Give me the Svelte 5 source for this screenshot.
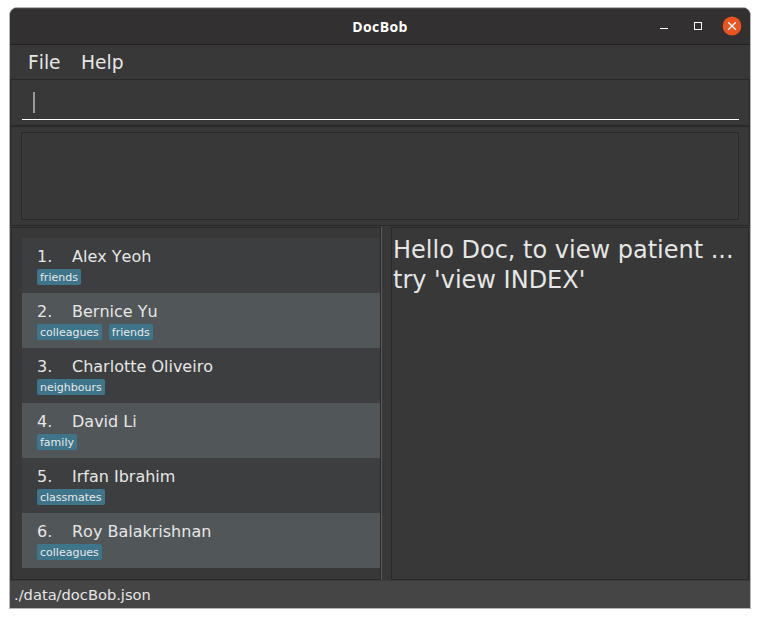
<script>
  const patients = [
    { name: 'Alex Yeoh', tags: ['friends'] },
    { name: 'Bernice Yu', tags: ['colleagues', 'friends'] },
    { name: 'Charlotte Oliveiro', tags: ['neighbours'] },
    { name: 'David Li', tags: ['family'] },
    { name: 'Irfan Ibrahim', tags: ['classmates'] },
    { name: 'Roy Balakrishnan', tags: ['colleagues'] }
  ];
</script>

<div class="window">
  <header class="titlebar">
    <span class="title">DocBob</span>
    <div class="controls">
      <svg width="100" height="36" viewBox="0 0 100 36">
        <path d="M10 20.5h8" stroke="#fff" stroke-width="1" />
        <rect x="44.5" y="14.5" width="7" height="7" fill="none" stroke="#fff" stroke-width="1" />
        <circle cx="82" cy="18" r="9.4" fill="#e95420" />
        <path d="M78.2 14.2l7.6 7.6M85.8 14.2l-7.6 7.6" stroke="#fff" stroke-width="1.4" />
      </svg>
    </div>
  </header>
  <nav class="menu"><span>File</span><span>Help</span></nav>
  <section class="command"><div class="field"><i class="caret"></i></div></section>
  <section class="result"><div class="display"></div></section>
  <main>
    <section class="list-pane">
      <ol>
        {#each patients as patient, i}
          <li>
            <div class="name"><span class="index">{i + 1}.</span><span>{patient.name}</span></div>
            <div class="tags">
              {#each patient.tags as tag}<span class="tag">{tag}</span>{/each}
            </div>
          </li>
        {/each}
      </ol>
    </section>
    <div class="divider"></div>
    <section class="detail">Hello Doc, to view patient ...<br />try 'view INDEX'</section>
  </main>
  <footer>./data/docBob.json</footer>
</div>

<style>
  :global(body) { margin: 0; background: #fff; }
  .window, .window * { box-sizing: border-box; }
  .window {
    width: 742px;
    height: 602px;
    margin: 7px 0 0 9px;
    border: 1px solid #b5b5b5;
    border-radius: 8px 8px 0 0;
    overflow: hidden;
    display: flex;
    flex-direction: column;
    background: #383838;
    color: #e6e6e6;
    font-family: "DejaVu Sans", sans-serif;
    font-kerning: none;
  }
  .titlebar {
    height: 37px;
    flex: none;
    display: grid;
    grid-template-columns: 100px 1fr 100px;
    background: #323030;
    border-bottom: 1px solid #202020;
    box-shadow: inset 0 1px #484646;
  }
  .title {
    grid-column: 2;
    text-align: center;
    color: #fff;
    font: bold 14px/37px "Open Sans", sans-serif;
    letter-spacing: 0.35px;
  }
  .controls svg { display: block; }
  .menu {
    height: 34px;
    flex: none;
    padding-left: 18px;
    display: flex;
    gap: 20.4px;
    font-size: 18.67px;
    line-height: 36px;
  }
  .command {
    height: 47px;
    flex: none;
    padding: 0 10px 0 11px;
    border: 1px solid #292929;
  }
  .field {
    height: 40px;
    border-bottom: 1px solid #fff;
    padding: 12px 0 0 11px;
  }
  .caret { display: block; width: 2px; height: 21px; background: #999; }
  .result {
    height: 100px;
    flex: none;
    padding: 5px 10px;
    border: 1px solid #292929;
  }
  .display { height: 88px; border: 1px solid #292929; }
  main {
    height: 355px;
    flex: none;
    padding: 1px 1px 0;
    display: flex;
    border-bottom: 1px solid #3c3c3c;
  }
  .list-pane {
    width: 370px;
    padding: 10px 0 0 10px;
    border: 1px solid #292929;
  }
  ol { list-style: none; margin: 0; padding: 0; }
  li { height: 55px; padding: 9px 15px 0; background: #3c3e3f; }
  li:nth-child(even) { background: #515658; }
  .name { display: flex; height: 22px; font-size: 16px; line-height: 19px; }
  .index { width: 35px; }
  .tags { display: flex; gap: 7px; }
  .tag {
    height: 16px;
    padding: 1px 3px 0;
    border-radius: 2px;
    background: #3e7b91;
    background: #3e758a;
    font-size: 11px;
    line-height: 16px;
    color: #e8e8e8;
  }
  .divider { width: 10px; border-left: 1px solid #5b5b5b; }
  .detail {
    flex: 1;
    padding: 7px 1px;
    border: 1px solid #292929;
    font-size: 24px;
    line-height: 30px;
    white-space: nowrap;
  }
  footer {
    flex: 1;
    padding-left: 4px;
    background: #454545;
    font-size: 14.67px;
    line-height: 28px;
  }
</style>
